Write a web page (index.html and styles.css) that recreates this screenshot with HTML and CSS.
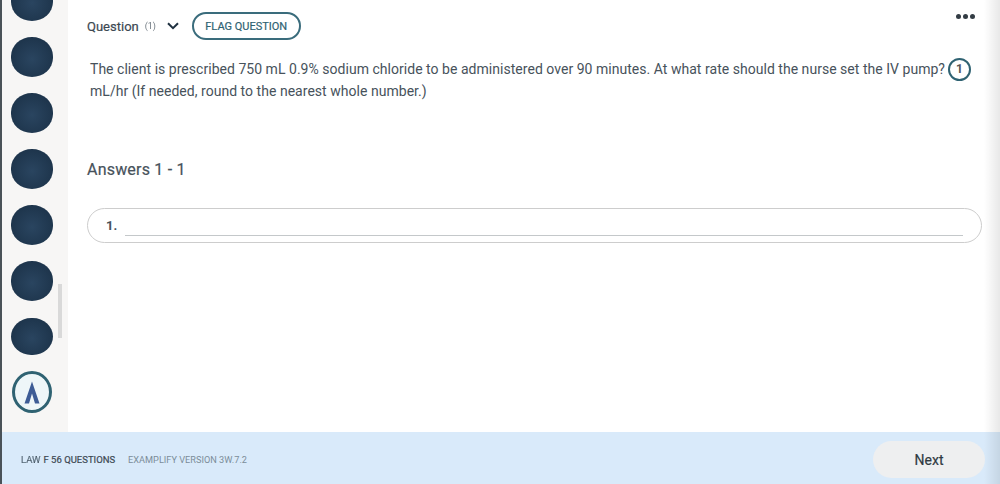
FILE: index.html
```html
<!DOCTYPE html>
<html lang="en">
<head>
<meta charset="utf-8">
<title>Examplify question</title>
<link rel="stylesheet" href="styles.css">
</head>
<body>
<div class="app">
  <div class="upper">
    <aside class="rail">
      <span class="dot"></span>
      <span class="dot"></span>
      <span class="dot"></span>
      <span class="dot"></span>
      <span class="dot"></span>
      <span class="dot"></span>
      <span class="dot dot-flat"></span>
      <span class="dot dot-current">
        <svg class="mark" viewBox="2 1 16 22" width="16" height="25" aria-hidden="true">
          <path d="M10 1 L2.5 23 L7 23 L10 13 L13 23 L17.5 23 Z" fill="#3d5c95"/>
        </svg>
      </span>
      <span class="scroll-thumb"></span>
    </aside>
    <main class="content">
      <header class="qbar">
        <span class="qlabel">Question</span>
        <span class="qnum">(1)</span>
        <svg class="chev" viewBox="0 0 12 8" width="12" height="8" aria-hidden="true">
          <path d="M1 1.2 L6 6.2 L11 1.2" fill="none" stroke="#1f3140" stroke-width="2"/>
        </svg>
        <span class="flag">FLAG QUESTION</span>
        <span class="more"><i></i><i></i><i></i></span>
      </header>
      <div class="question">
        <p class="qline">The client is prescribed 750 mL 0.9% sodium chloride to be administered over 90 minutes. At what rate should the nurse set the IV pump? <span class="badge">1</span></p>
        <p class="qline2">mL/hr (If needed, round to the nearest whole number.)</p>
      </div>
      <h2 class="answers">Answers 1 - 1</h2>
      <div class="answer">
        <span class="anum">1.</span>
        <span class="aline"></span>
      </div>
    </main>
  </div>
  <footer class="foot">
    <span class="count"><b class="smudge">LAW</b>F 56 QUESTIONS</span>
    <span class="version">EXAMPLIFY VERSION 3W.7.2</span>
    <span class="next">Next</span>
  </footer>
  <div class="edge"></div>
</div>
</body>
</html>
```
FILE: styles.css
```css
* { box-sizing: border-box; }
html, body { margin: 0; height: 100%; overflow: hidden; background: #fff; }
body { font-family: Roboto, "Liberation Sans", sans-serif; color: #3a4650; }
.app { width: 1000px; height: 484px; display: flex; flex-direction: column; border-left: 2px solid #4a5258; position: relative; }
.upper { height: 432px; display: flex; }

.rail { width: 66px; flex: none; background: #f7f6f5; display: flex; flex-direction: column; align-items: center; gap: 16px; padding: 0 6px 0 0; position: relative; overflow: hidden; height: 432px; }
.dot { flex: none; width: 42px; height: 40px; border-radius: 50% / 48%; background: radial-gradient(circle at 50% 55%, #2a4560, #1d344b 75%); filter: blur(0.6px); }
.dot:first-child { margin-top: -19px; }
.dot-flat { height: 37px; margin-top: 1px; margin-bottom: 2px; border-radius: 48% / 50%; }
.dot-current { width: 40px; height: 42px; margin-top: -2px; background: #eef6f8; border: 3px solid #2f6272; border-radius: 50%; display: flex; align-items: center; justify-content: center; }
.scroll-thumb { position: absolute; left: 56px; top: 284px; width: 4px; height: 54px; background: #d9d9d9; }

.content { flex: 1; min-width: 0; padding: 0 0 0 19px; }
.qbar { height: 52px; display: flex; align-items: center; position: relative; }
.qlabel { font-size: 13px; color: #3c4852; -webkit-text-stroke: 0.2px #3c4852; }
.qnum { font-size: 9px; color: #6e7880; margin-left: 6px; width: 16px; filter: blur(0.6px); }
.chev { margin-left: 6px; }
.flag { margin-left: 13px; width: 109px; height: 28px; border: 2px solid #3a6c7c; border-radius: 14px; font-size: 11px; color: #2f6272; -webkit-text-stroke: 0.2px #2f6272; display: flex; align-items: center; justify-content: center; }
.more { position: absolute; left: 869px; top: 14px; display: flex; gap: 2px; }
.more i { width: 5px; height: 5px; border-radius: 50%; background: #333c44; }

.question { padding: 6px 0 0 3px; font-size: 14px; line-height: 22px; color: #47525b; letter-spacing: 0.03px; }
.question p { margin: 0; white-space: nowrap; }
.qline { display: flex; align-items: center; height: 22px; }
.badge { flex: none; margin-left: 3px; width: 23px; height: 23px; border: 2px solid #2f6272; border-radius: 50%; font-size: 12px; font-weight: 700; color: #555; display: flex; align-items: center; justify-content: center; }

.answers { margin: 56px 0 0; font-size: 16px; line-height: 24px; font-weight: 400; color: #47525b; -webkit-text-stroke: 0.2px #47525b; letter-spacing: 0.2px; }
.answer { margin-top: 26px; width: 895px; height: 35px; border: 1px solid #cdcdcd; border-radius: 18px; display: flex; align-items: center; padding: 0 18px; position: relative; }
.anum { font-size: 13px; font-weight: 700; color: #45505a; }
.aline { position: absolute; left: 37px; right: 18px; bottom: 6px; height: 1px; background: #c4c8ca; }

.edge { position: absolute; right: 0; top: 0; width: 16px; height: 100%; background: linear-gradient(to right, rgba(0,0,0,0), rgba(0,0,0,0.09)); pointer-events: none; }

.foot { flex: 1; background: #d9eafa; display: flex; align-items: center; padding: 3px 15px 0 19px; }
.count { font-size: 9.5px; color: #3c4852; -webkit-text-stroke: 0.2px #3c4852; }
.smudge { font-weight: 400; color: #6f8595; filter: blur(0.7px); display: inline-block; margin-right: 3px; }
.version { margin-left: 13px; font-size: 9.2px; color: #7b8d99; }
.next { margin-left: auto; width: 112px; height: 37px; border-radius: 19px; background: #eeeff0; font-size: 14px; color: #2f3a42; -webkit-text-stroke: 0.2px #2f3a42; display: flex; align-items: center; justify-content: center; }
```
